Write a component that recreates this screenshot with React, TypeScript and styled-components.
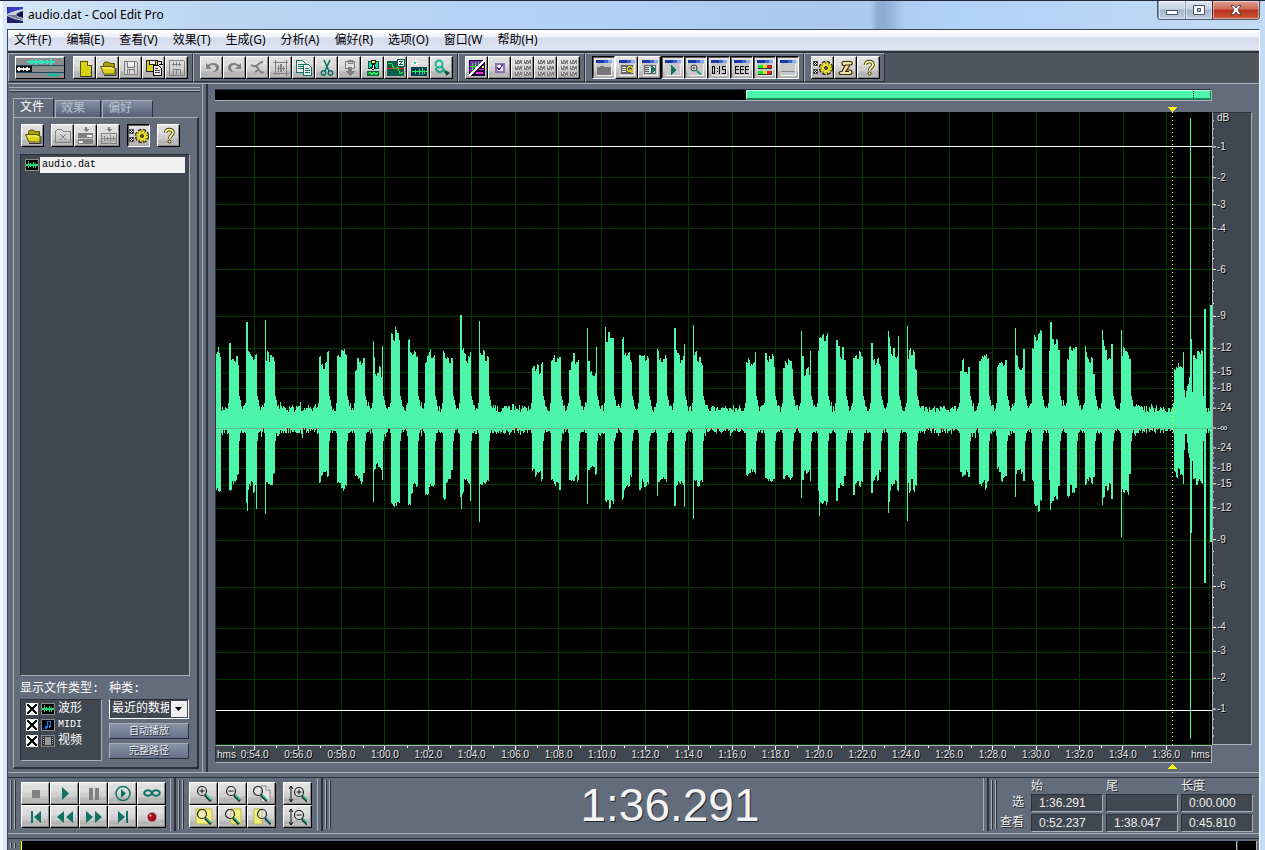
import React from "react";
import styled, { createGlobalStyle, css } from "styled-components";

const C = {
  panel: "#636c7a",
  well: "#404750",
  deep: "#505660",
  light: "#a9b0ba",
  dark: "#2c3038",
  wave: "#4df5ab",
  teal: "#0f7263",
  grid: "#003c00",
};
const UI = `"Noto Sans", "Noto Sans CJK SC", sans-serif`;
const SONG = `"Liberation Mono", "Noto Sans CJK SC", monospace`;
const ARIAL = `"Liberation Sans", "Noto Sans CJK SC", sans-serif`;

const Global = createGlobalStyle`
  * { box-sizing: border-box; }
  html, body { margin: 0; background: #b4d2f2; }
  button, input, select { font: inherit; color: inherit; margin: 0; padding: 0; border: 0; border-radius: 0; background: none; }
`;

/* ---------- window frame ---------- */
const Frame = styled.div`
  display: flex;
  flex-direction: column;
  height: 100vh;
  min-height: 850px;
  min-width: 1000px;
  overflow: hidden;
  padding: 0 5px 0 7px;
  border-top: 1px solid #23273a;
  background:
    linear-gradient(90deg, rgba(255,255,255,.75) 0 2px, transparent 3px),
    linear-gradient(90deg, transparent 68.8%, rgba(70,100,140,.3) 69.4% 70%, transparent 71.5%),
    linear-gradient(90deg, #d8e8f8 0, #bcd6f2 16%, #afd0f4 50%, #a9c8ea 66%, #b0d2f6 76%, #c3dbf4 100%);
`;
const TitleBar = styled.header`
  display: flex;
  flex: none;
  height: 28px;
  gap: 5px;
  font: 12px/28px ${UI};
  color: #000;
`;
const Title = styled.h1`
  flex: 1;
  margin: 0;
  font: inherit;
`;
const Logo = styled.svg`
  width: 16px;
  height: 16px;
  margin-top: 6px;
`;
const Caption = styled.div`
  display: flex;
  height: 19px;
  border: 1px solid #4b5666;
  border-top: 0;
  border-radius: 0 0 4px 4px;
  overflow: hidden;
`;
const CaptionButton = styled.button<{ $close?: boolean }>`
  display: grid;
  place-items: center;
  width: ${(p) => (p.$close ? 47 : 27)}px;
  border-left: ${(p) => (p.$close ? "1px solid #5a2020" : "1px solid #8494a8")};
  box-shadow: inset 0 0 0 1px rgba(255, 255, 255, 0.45);
  background: ${(p) =>
    p.$close
      ? "linear-gradient(#e0a193 0, #cf6a57 45%, #b8321d 50%, #d0573c 100%)"
      : "linear-gradient(#dfe8f2 0, #c4d2e2 45%, #a3b5ca 50%, #bccee0 100%)"};
`;
const Body = styled.div`
  display: flex;
  flex-direction: column;
  flex: 1;
  min-height: 0;
  border: solid #3f4854;
  border-width: 1px 1px 0;
  border-right-color: #fff;
  background: ${C.panel};
`;
const MenuBar = styled.nav`
  display: flex;
  flex: none;
  gap: 15px;
  height: 21px;
  padding-left: 6px;
  border-bottom: 1px solid #a8acb8;
  background: linear-gradient(#fff 0, #eef1f8 35%, #d5daec 40%, #e0e5f4 100%);
  font: 12px/20px ${UI};
  color: #000;
  white-space: nowrap;
`;

/* ---------- toolbar ---------- */
const Toolbar = styled.div`
  display: flex;
  flex: none;
  height: 33px;
  border-top: 2px solid ${C.dark};
  border-bottom: 1px solid ${C.light};
  background: ${C.deep};
`;
const ToolGroup = styled.div`
  display: flex;
  height: 29px;
  padding: 2px 4px 0 6px;
  border: 1px solid ${C.dark};
  border-top-color: ${C.light};
  border-left-color: ${C.light};
  background: ${C.panel};
`;
const Gap = styled.span<{ $w: number }>`
  flex: none;
  width: ${(p) => p.$w}px;
`;
const metal = css`
  background:
    repeating-linear-gradient(177deg, rgba(255,255,255,.14) 0 2px, transparent 3px 6px),
    linear-gradient(#e2e2e2, #d6d6d6 45%, #b4b4b4 80%, #a8a8a8);
`;
const Tool = styled.button<{ $w?: number; $down?: boolean }>`
  display: grid;
  place-items: center;
  flex: none;
  width: ${(p) => p.$w ?? 23}px;
  height: 23px;
  border: solid;
  border-width: 1px;
  ${metal}
  ${(p) =>
    p.$down
      ? css`
          border-color: #000 #fff #fff #000;
          box-shadow: inset 1px 1px 0 #5c5c5c;
        `
      : css`
          border-color: #fff #000 #000 #fff;
          box-shadow: inset -1px -1px 0 #8c8c8c;
        `}
  svg { display: block; }
`;

/* ---------- file organiser ---------- */
const Main = styled.div`
  display: flex;
  flex: 1;
  min-height: 0;
`;
const Organizer = styled.aside`
  display: flex;
  flex-direction: column;
  flex: none;
  width: 194px;
  padding: 3px 3px 3px 5px;
  font: 12px/16px ${SONG};
  color: #fff;
`;
const GripRow = styled.div`
  flex: none;
  height: 4px;
  margin: 0 -1px 7px -4px;
  border: solid ${C.light};
  border-width: 1px 0;
  box-shadow: 0 1px 0 ${C.dark};
`;
const Tabs = styled.div`
  display: flex;
  align-items: flex-end;
  gap: 1px;
  height: 19px;
`;
const Tab = styled.button<{ $on?: boolean; $w: number }>`
  width: ${(p) => p.$w}px;
  height: ${(p) => (p.$on ? 20 : 17)}px;
  margin-bottom: ${(p) => (p.$on ? -1 : 0)}px;
  border: solid;
  border-width: 1px 1px 0;
  border-color: ${C.light} ${C.dark} transparent ${C.light};
  background: ${(p) => (p.$on ? C.panel : "linear-gradient(#8490a6, #566078)")};
  color: ${(p) => (p.$on ? "#fff" : "#b8c0cc")};
  text-align: left;
  padding-left: ${(p) => (p.$on ? 6 : 5)}px;
  line-height: 17px;
`;
const TabPanel = styled.section`
  display: flex;
  flex-direction: column;
  flex: 1;
  min-height: 0;
  padding: 6px 7px 6px 6px;
  border: 1px solid ${C.dark};
  border-top-color: ${C.light};
  border-left-color: ${C.light};
  border-right-width: 2px;
  border-bottom-width: 2px;
`;
const PanelTools = styled.div`
  display: flex;
  flex: none;
  height: 30px;
`;
const inset = css`
  border: 1px solid ${C.light};
  border-top-color: ${C.dark};
  border-left-color: ${C.dark};
  background: ${C.well};
`;
const FileList = styled.ul`
  flex: 1;
  margin: 0;
  padding: 2px 4px;
  list-style: none;
  ${inset}
`;
const FileRow = styled.li`
  display: flex;
  align-items: center;
  gap: 1px;
  height: 16px;
  font-size: 10px;
  color: #000;
  span {
    flex: 1;
    padding-left: 2px;
    background: #f0f0f0;
    line-height: 16px;
  }
`;
const Filters = styled.div`
  display: grid;
  flex: none;
  grid-template-columns: 82px 80px;
  column-gap: 7px;
  grid-template-rows: 23px 62px;
  align-items: end;
`;
const FilterHead = styled.div`
  font-size: 12px;
  line-height: 20px;
  white-space: nowrap;
`;
const TypeList = styled.div`
  height: 62px;
  padding: 1px 5px;
  ${inset}
`;
const TypeRow = styled.label`
  display: flex;
  align-items: center;
  gap: 3px;
  height: 16px;
  font-size: 12px;
  line-height: 16px;
`;
const Mono = styled.span`
  font-size: 10px;
`;
const Tick = styled.input`
  appearance: none;
  width: 12px;
  height: 12px;
  border: 1px solid #fff;
  background: #fff;
  &:checked {
    background:
      linear-gradient(45deg, transparent 42%, #000 43% 57%, transparent 58%),
      linear-gradient(-45deg, transparent 42%, #000 43% 57%, transparent 58%), #fff;
  }
`;
const KindColumn = styled.div`
  display: flex;
  flex-direction: column;
  gap: 4px;
  height: 62px;
`;
const SelectBox = styled.div`
  position: relative;
  height: 20px;
  border: 1px solid #fff;
  border-top-color: ${C.dark};
  background: ${C.well};
  svg {
    position: absolute;
    top: 1px;
    right: 1px;
    pointer-events: none;
  }
`;
const Select = styled.select`
  appearance: none;
  width: 59px;
  height: 18px;
  padding-left: 2px;
  overflow: hidden;
  outline: 0;
  font-size: 12px;
  line-height: 18px;
`;
const FlatButton = styled.button`
  height: 16px;
  border: 1px solid ${C.dark};
  border-top-color: ${C.light};
  border-left-color: ${C.light};
  background: linear-gradient(#8a94a6, #66718a);
  font-size: 10px;
  line-height: 13px;
  color: #e8ecf4;
  text-shadow: 1px 1px 0 #2c3038;
`;
const Divider = styled.div`
  flex: none;
  width: 6px;
  border: solid;
  border-width: 0 2px 0 1px;
  border-color: ${C.light} ${C.dark} ${C.light} ${C.light};
`;

/* ---------- waveform ---------- */
const Editor = styled.main`
  display: grid;
  flex: 1;
  min-width: 0;
  grid-template-columns: minmax(0, 1fr) 40px;
  grid-template-rows: 12px 11px minmax(0, 1fr) 18px 9px;
  padding: 5px 7px 0 7px;
`;
const Overview = styled.div`
  display: flex;
  justify-content: flex-end;
  border: 1px solid ${C.light};
  border-top-color: ${C.dark};
  border-left: 0;
  background: #000;
`;
const OverviewThumb = styled.div`
  position: relative;
  width: 46.7%;
  border: solid;
  border-width: 1px 1px 2px;
  border-color: #b9ffe0 #1b8458 #1b8458 #b9ffe0;
  background: ${C.wave};
  &::after {
    content: "";
    position: absolute;
    right: 16px;
    top: 0;
    bottom: 0;
    border-left: 1px dotted #123;
  }
`;
const Marker = styled.div`
  display: flex;
  padding-right: 35px;
  justify-content: flex-end;
  overflow: hidden;
`;
const Canvas = styled.svg`
  display: block;
  width: 100%;
  height: 100%;
  border-left: 1px solid ${C.dark};
  background: #000;
`;
const Scale = styled.svg`
  display: block;
  width: 100%;
  height: 100%;
  background: ${C.well};
  border: 1px solid ${C.light};
  border-top-color: ${C.dark};
  font: 10px ${ARIAL};
  text {
    fill: #e6e6e6;
    text-shadow: 1px 1px 0 #000;
  }
`;
const TimeRuler = styled.div`
  display: flex;
  border: 1px solid ${C.light};
  border-left-color: ${C.dark};
  background: ${C.well};
  font: 10px/17px ${ARIAL};
  color: #e6e6e6;
  text-shadow: 1px 1px 0 #000;
  white-space: nowrap;
`;
const RulerUnit = styled.span<{ $w: number }>`
  flex: none;
  width: ${(p) => p.$w}px;
  padding-left: ${(p) => (p.$w > 20 ? 3 : 1)}px;
`;
const RulerMark = styled.span`
  flex: 1;
  text-align: center;
  background:
    linear-gradient(#fff, #fff) 50% 0 / 1px 4px no-repeat,
    linear-gradient(#fff, #fff) 0 0 / 1px 2px no-repeat;
`;

/* ---------- transport ---------- */
const Bottom = styled.footer`
  display: flex;
  flex: none;
  height: 62px;
  border: solid ${C.light};
  border-width: 1px 0;
`;
const Segment = styled.div<{ $grow?: boolean; $w?: number }>`
  display: flex;
  flex: ${(p) => (p.$grow ? "1" : "none")};
  ${(p) => p.$w && `width: ${p.$w}px;`}
  margin-top: 4px;
  border-top: 1px solid ${C.dark};
  padding: 0 0 2px 2px;
`;
const Grip = styled.div`
  flex: none;
  width: 5px;
  margin: 2px 0;
  border: solid ${C.light};
  border-width: 0 1px;
  box-shadow: 1px 0 0 ${C.dark}, inset 1px 0 0 ${C.dark};
`;
const Keys = styled.div<{ $cols: number }>`
  display: grid;
  flex: none;
  grid-template-columns: repeat(${(p) => p.$cols}, 29px);
  grid-auto-rows: 23px;
  align-content: start;
  padding-top: 4px;
  margin-left: ${(p) => (p.$cols === 1 ? 7 : 6)}px;
`;
const Spring = styled.div`
  flex: 1;
`;
const BigTime = styled.output`
  flex: 1;
  padding-left: 27px;
  font: 46px/54px ${ARIAL};
  text-align: center;
  color: #f4f4f4;
  text-shadow: 1px 1px 0 #22262c;
`;
const Times = styled.div`
  display: grid;
  flex: 1;
  grid-template-columns: 28px repeat(3, 72px);
  grid-template-rows: 14px 18px 18px;
  column-gap: 3px;
  row-gap: 2px;
  justify-content: end;
  padding-right: 5px;
  margin-right: 1px;
  font: 12px/16px ${ARIAL};
  color: #eee;
  text-shadow: 1px 1px 0 #22262c;
`;
const TimeLabel = styled.span<{ $right?: boolean }>`
  text-align: ${(p) => (p.$right ? "right" : "left")};
  padding-right: ${(p) => (p.$right ? 4 : 0)}px;
  white-space: nowrap;
`;
const TimeField = styled.input`
  width: 72px;
  height: 18px;
  padding-left: 7px;
  ${inset}
`;
const Status = styled.div`
  display: flex;
  flex: none;
  height: 12px;
  margin-top: 4px;
  border-top: 1px solid ${C.dark};
  padding: 2px 2px 0;
`;
const Meter = styled.div<{ $end?: boolean }>`
  flex: ${(p) => (p.$end ? "none" : "1")};
  width: 20px;
  margin-left: ${(p) => (p.$end ? 0 : 6)}px;
  border: solid ${C.light};
  border-width: 0 1px 0 0;
  border-left: ${(p) => (p.$end ? "1px solid #444" : "1px solid #ff0")};
  background: #000;
`;

/* ---------- icons ---------- */
const Ic = ({ children, w = 18, h = 18, soft }: { children: React.ReactNode; w?: number; h?: number; soft?: boolean }) => (
  <svg width={w} height={h} viewBox={`0 0 ${w} ${h}`} shapeRendering={soft ? "auto" : "crispEdges"} fill="none" aria-hidden="true">
    {children}
  </svg>
);
const G = "#808080";
const Y = "#d8d018";

const Win = ({ children }: { children?: React.ReactNode }) => (
  <Ic>
    <path d="M1 1h16v16H1z" fill="#c8c8c8" />
    <path d="M2 16h14V5M16 5v12" stroke="#eee" />
    <path d="M1 1h8v3H1z" fill="#1838a8" />
    <path d="M9 1h4v3H9z" fill="#3c64d0" />
    <path d="M13 1h4v3h-4z" fill="#88a8e8" />
    {children}
  </Ic>
);
const folderIcon = (
  <Ic soft>
    <path d="M4.500 11V4.500L6 3h3.500l1.500 1.500h4.500V9" fill="#a89c08" stroke="#5c5600" />
    <path d="M1.500 7.500h10.500l4 1.500v6H5z" fill="#ddd020" stroke="#5c5600" />
    <path d="M3 9h9l3 1" stroke="#fff890" />
    <path d="M5 16.500h12V9" stroke="#333" />
  </Ic>
);
const diskArt = (c: string, f: string) => (
  <>
    <path d="M2.500 2.500h12l1 1v12h-13z" fill={f} stroke={c} />
    <path d="M5.500 3v5h7V3M5.500 15.500v-5h7v5M7.500 11v4" stroke={c} />
    <path d="M6 3h6v4H6z" fill="#f0f0f0" />
  </>
);
const groupGrid = (
  <Ic>
    {[1, 7, 13].map((y) =>
      [1, 10].map((x) => (
        <g key={`${x}-${y}`}>
          <path d={`M${x} ${y}h7v4h-7z`} fill={G} />
          <path d={`M${x + 1} ${y}h1v2h-1zM${x + 4} ${y}h1v1h-1zM${x + 3} ${y + 2}h1v1h-1zM${x + 5} ${y + 3}h1v1h-1z`} fill="#ddd" />
        </g>
      ))
    )}
  </Ic>
);
const gearIcon = (
  <Ic w={20} soft>
    <g shapeRendering="crispEdges">
      <path d="M0 2h5v5H0zM0 10h5v5H0z" fill="#555" />
      <path d="M1 3h3v3H1zM1 11h3v3H1z" fill="#eee" />
      <path d="M1 3h1v1H1zM2 4h1v1H2zM3 5h1v1H3zM3 3h1v1H3zM1 5h1v1H1zM1 11h1v1H1zM2 12h1v1H2zM3 13h1v1H3zM3 11h1v1H3zM1 13h1v1H1z" fill="#000" />
    </g>
    <circle cx="13" cy="9" r="5" stroke="#2c2800" strokeWidth="4.400" strokeDasharray="2.800 1.127" />
    <circle cx="13" cy="9" r="4.700" stroke="#ecdc20" strokeWidth="2.600" strokeDasharray="2 1.690" />
    <circle cx="13" cy="9" r="3" stroke="#ecdc20" strokeWidth="2.600" />
    <circle cx="13" cy="9" r="1.600" fill="#555" stroke="#2c2800" strokeWidth=".8" />
  </Ic>
);
const helpIcon = (
  <Ic soft>
    <path d="M5.500 6c0-4.500 7.500-4.500 7.500-.5 0 3-3.500 3-3.500 6" stroke="#3c3800" strokeWidth="3.600" />
    <path d="M5.500 6c0-4.500 7.500-4.500 7.500-.5 0 3-3.500 3-3.500 6" stroke="#fff8a0" strokeWidth="1.800" />
    <circle cx="9.500" cy="14.500" r="1.500" fill="#fff8a0" stroke="#3c3800" />
  </Ic>
);
const lens = (x: number, y: number, sign: string) => (
  <>
    <circle cx={x} cy={y} r="4.500" fill="#e8e8e8" fillOpacity=".45" stroke="#222" strokeWidth="1.200" />
    {sign && <path d={sign === "+" ? `M${x - 2.5} ${y}h5M${x} ${y - 2.5}v5` : `M${x - 2.5} ${y}h5`} stroke="#111" />}
    <path d={`M${x + 3} ${y + 4}l6 6`} stroke="#222" strokeWidth="2.600" />
    <path d={`M${x + 4} ${y + 4}l5 5`} stroke="#18c8a0" strokeWidth="1.400" />
  </>
);
const waveIcon = (
  <Ic w={14} h={12}>
    <path d="M0 0h14v12H0z" fill="#888" />
    <path d="M1 1h12v10H1z" fill="#000" />
    <path d="M1 5h12v2H1zM3 2h1v7H3zM5 4h1v4H5zM8 3h1v6H8zM10 4h1v5h-1z" fill="#20d878" />
  </Ic>
);

const fileIcons: [string, React.ReactNode][] = [
  ["新建", <Ic><path d="M4 2h7l4 4v11H4z" fill={Y} stroke="#5c5600" /><path d="M11 2v4h4" fill="#fff8a0" stroke="#5c5600" /><path d="M15.500 6v11.500H5" stroke="#333" /></Ic>],
  ["打开", folderIcon],
  ["保存", <Ic>{diskArt(G, "#d8d8d8")}</Ic>],
  ["另存为", <Ic><path d="M1 1h11v11H1z" fill="#d8d018" stroke="#222" /><path d="M4 1h6v4H4z" fill="#eee" stroke="#222" /><path d="M13 2h3v3M14 5h4" stroke="#000" /><path d="M8.500 6.500h5l3 3v7h-8z" fill="#eee" stroke="#000" /><path d="M10 9h3M10 11h5M10 13h5" stroke="#444" /></Ic>],
  ["保存全部", <Ic><path d="M1.500 1.500h14l1 1v14h-15z" stroke={G} /><path d="M4 5h9M5.500 3v4M8.500 3v4M11.500 3v4M5.500 16v-6h7v6M8 11v5" stroke={G} /></Ic>],
];
const editIcons: [string, React.ReactNode][] = [
  ["撤消", <Ic soft><path d="M3 4v6h6L6.500 7.500C9 5 13 6 13 9c0 2-1.500 3.500-4 4 5 0 7.500-2 7-5-.6-4-6.500-5.500-11-2z" fill={G} /></Ic>],
  ["重做", <Ic soft><path d="M15 4v6H9l2.500-2.500C9 5 5 6 5 9c0 2 1.500 3.500 4 4-5 0-7.500-2-7-5 .6-4 6.500-5.500 11-2z" fill={G} /></Ic>],
  ["重复", <Ic soft><path d="M14 3c-4 0-5 4-8 4s-4-1-4-1M6 7c2 1 3 1 4 4 1 2 3 3 5 2M10 10l-4 3" stroke={G} strokeWidth="1.800" /></Ic>],
  ["剪裁", <Ic><path d="M1 3h15v1H1zM3 1h1v15H3zM1 14h16v1H1zM14 1h1v16h-1zM5 9h8v1H5zM6 6h1v7H6zM8 5h2v8H8zM11 7h1v5h-1z" fill={G} /></Ic>],
  ["复制", <Ic><path d="M1.500 1.500h6l3 3v9h-9z" fill="#eee" stroke={C.teal} /><path d="M3 5h5M3 7h5M3 9h5" stroke={C.teal} /><path d="M8.500 5.500h5l3 3v8h-8z" fill="#eee" stroke={C.teal} /><path d="M10 9h4M10 11h5M10 13h5" stroke={C.teal} /></Ic>],
  ["剪切", <Ic soft><path d="M6 1l5 11M12 1L7 12" stroke={C.teal} strokeWidth="1.600" /><circle cx="5.500" cy="14" r="2.200" stroke={C.teal} strokeWidth="1.400" /><circle cx="12.500" cy="14" r="2.200" stroke={C.teal} strokeWidth="1.400" /></Ic>],
  ["粘贴", <Ic><path d="M4.500 2.500h9v7h-9zM7 1h4v3H7z" fill="#ddd" stroke={G} /><path d="M7 8h4v4h3l-5 5-5-5h3z" fill={G} /></Ic>],
  ["混合粘贴", <Ic><path d="M4 2h10v7H4z" fill="#18d8b0" stroke="#063" /><path d="M7 1h4v3H7z" fill="#ffef60" stroke="#222" /><path d="M8 5h2v3h2l-3 3-3-3h2z" fill="#fff" stroke="#111" /><path d="M3 12h12v5H3z" fill="#064" /><path d="M4 15l2-2 2 3 2-3 2 3 2-3" stroke="#2f4" /></Ic>],
  ["零点", <Ic><path d="M0 2h17v15H0z" fill="#0c5c4c" /><path d="M0 9h17v1H0z" fill="#f02020" /><path d="M1 4l4 1 2 5 4-2 2 7 3-2" stroke="#20e040" /><path d="M10 0h8v8h-8z" fill="#0c5c4c" /><path d="M11 1h6v6h-6z" fill="#eee" /><path d="M12 2h4v1h-1v1h-1v1h2v1h-4V5h1V4h1V3h-2z" fill="#0c5c4c" /></Ic>],
  ["降噪", <Ic><path d="M1 8h16v9H1z" fill="#0c3c54" /><path d="M2 12h15v1H2zM5 11h1v4H5zM9 10h1v6H9zM12 9h1v7h-1zM14 11h1v4h-1z" fill="#28f060" /><path d="M5 0v8M1 4h8M2 1l6 6M8 1L2 7" stroke="#fff" /><path d="M4 3h2v2H4z" fill="#30d0b0" /></Ic>],
  ["效果", <Ic soft><circle cx="6" cy="5" r="3.500" stroke="#18b890" strokeWidth="2" /><path d="M3 9c0 4 6 6 6 2M8 8c3 0 2 6 6 6" stroke="#18a080" strokeWidth="2" /><path d="M12 11l5 3-4 3z" fill="#053" /></Ic>],
];
const viewIcons: [string, React.ReactNode][] = [
  ["波形与频谱", <Ic><path d="M1 1h16v16H1z" fill="#18083c" /><path d="M2 2h14L2 16z" fill="#7a28b8" /><path d="M2 7h8v1H2zM4 4h1v7H4zM7 3h1v8H7zM10 3h1v5h-1z" fill="#20f020" /><path d="M1 17L17 1" stroke="#fff" strokeWidth="1.500" /><path d="M8 13h7v2H8zM11 10h5v1h-5z" fill="#f030d0" /><path d="M14 7h2v2h-2z" fill="#fff020" /></Ic>],
  ["多轨选择", <Ic><path d="M4.500 4.500h8v8h-8z" fill="#eee" stroke="#8c70b8" strokeWidth="2" /><path d="M6 8l2 3 4-6" stroke="#5020a0" /></Ic>],
  ["分组一", groupGrid],
  ["分组二", groupGrid],
  ["分组三", groupGrid],
];
const windowIcons: [string, React.ReactNode, boolean][] = [
  ["文件窗口", <Win><path d="M2 8h3V7h4v1h7v8H2z" fill="#777" /></Win>, true],
  ["提示列表", <Win><path d="M3 6h12v9H3z" fill="#666" /><path d="M4 8h4v1H4zM4 10h4v1H4zM4 12h4v1H4z" fill="#eee" /><circle cx="12" cy="10" r="2.500" stroke="#d8cc10" strokeWidth="1.500" /><path d="M12 11l3 3" stroke="#d8cc10" strokeWidth="1.500" /></Win>, false],
  ["播放列表", <Win><path d="M3 6h12v9H3z" fill="#666" /><path d="M4 7h10v7H4z" fill="#ddd" /><path d="M4 8h4v1H4zM4 10h4v1H4zM4 12h4v1H4z" fill="#555" /><path d="M10 6l5 4.500-5 4.500z" fill={C.teal} /></Win>, false],
  ["播放控制", <Win><path d="M7 6l5 5-5 5z" fill={C.teal} /></Win>, true],
  ["缩放控制", <Win><g shapeRendering="auto"><circle cx="7" cy="9" r="3" fill="#eee" stroke="#333" /><path d="M5.500 9h3M7 7.500v3" stroke="#222" strokeWidth=".8" /><path d="M9.500 11.500l4.500 4" stroke="#18a080" strokeWidth="2" /></g></Win>, true],
  ["时间窗口", <Win><path d="M2 7h3v8H2zM3 8v6h1V8zM7 9h1v1H7zM7 12h1v1H7zM9 7h1v8H9zM12 7h4v1h-3v2h3v5h-4v-1h3v-3h-3z" fill="#000" fillRule="evenodd" /></Win>, true],
  ["选择窗口", <Win>{[2, 7, 12].map((x) => <path key={x} d={`M${x} 7h4v1h-3v2h3v1h-3v3h3v1h-4z`} fill="#111" />)}</Win>, true],
  ["电平表", <Win><path d="M2 6h14v4H2zM2 12h14v4H2z" fill="#333" /><path d="M2 6h5v3H2zM2 12h5v3H2z" fill="#20e030" /><path d="M7 6h4v3H7zM7 12h4v3H7z" fill="#f0e020" /><path d="M11 6h4v3h-4zM11 12h4v3h-4z" fill="#e82020" /></Win>, true],
  ["状态栏", <Win><path d="M2 12h14v1H2z" fill="#888" /></Win>, true],
];
const helpIcons: [string, React.ReactNode][] = [
  ["设置", gearIcon],
  ["脚本", <Ic soft><path d="M6.500 2.500h7c2.500 0 2.500 3.500 0 3.500h-.5L10 11h3c2.500 0 2.500 4.500 0 4.500H4c-2.500 0-2.500-3 0-3h1l3-6H6.500c-2 0-2-4 0-4z" fill="#f4e0a8" stroke="#3c2c00" strokeWidth="1.200" /><path d="M8 6h5M10 11l-2 1.500h4" stroke="#3c2c00" /></Ic>],
  ["帮助", helpIcon],
];
const transport: [string, React.ReactNode][] = [
  ["停止", <path d="M5 5h8v8H5z" fill={G} />],
  ["播放", <path d="M6 2l7 6.500L6 15z" fill={C.teal} />],
  ["暂停", <path d="M4 3h4v12H4zM10 3h4v12h-4z" fill={G} />],
  ["播放到结尾", <><circle cx="9" cy="8.500" r="7" stroke={C.teal} strokeWidth="1.500" /><path d="M7 4v9l5-4.500z" fill={C.teal} /></>],
  ["循环播放", <><ellipse cx="5" cy="8" rx="3.800" ry="2.800" stroke={C.teal} strokeWidth="2" /><ellipse cx="13" cy="8" rx="3.800" ry="2.800" stroke={C.teal} strokeWidth="2" /></>],
  ["到开头", <path d="M4 3h2v12H4zM14 3v12L7 9z" fill={C.teal} />],
  ["倒带", <path d="M8 3v12L1 9zM17 3v12l-7-6z" fill={C.teal} />],
  ["快进", <path d="M1 3v12l7-6zM10 3v12l7-6z" fill={C.teal} />],
  ["到结尾", <path d="M12 3h2v12h-2zM4 3v12l7-6z" fill={C.teal} />],
  ["录音", <><circle cx="9" cy="9" r="4.500" fill="#a01018" /><circle cx="7.500" cy="7.500" r="1.200" fill="#e89090" /></>],
];
const zoomKeys: [string, React.ReactNode][] = [
  ["放大", lens(7, 6, "+")],
  ["缩小", lens(7, 6, "-")],
  ["全部显示", <><path d="M8 1h5l4 4v12H8z" fill="#e4e4e4" stroke="#888" /><path d="M13 1v4h4" fill="#fff" stroke="#888" />{lens(5, 6, "")}</>],
  ["放大选区", <><path d="M1 1h16v15H1z" fill="#f4f080" stroke="#c0b840" />{lens(7, 6, "")}</>],
  ["放大选区左侧", <><path d="M7 1h10v15H7z" fill="#f4f080" stroke="#c0b840" />{lens(6, 6, "")}</>],
  ["放大选区右侧", <><path d="M1 1h8v15H1z" fill="#f4f080" stroke="#c0b840" />{lens(9, 6, "")}</>],
];
const vArrow = <path d="M2 1v16M0 4l2-3 2 3M0 14l2 3 2-3" stroke="#111" />;

/* ---------- waveform data ---------- */
const X0 = 216;
const Y0 = 112;
type Burst = [number, number, number[], number[]];
const bursts: Burst[] = [
  [216, 221, [352, 347, 352, 355], [488, 491, 489]],
  [229, 239, [357, 360, 357, 360, 356, 366], [490, 482, 480, 475]],
  [246, 257, [350, 353, 356, 359, 354], [489, 485, 481, 492, 484]],
  [265, 275, [361, 351, 361, 355, 357, 362], [482, 483, 485, 474]],
  [319, 329, [356, 364, 367, 362, 350], [482, 475, 470, 471, 475]],
  [337, 347, [355, 358, 350, 349, 353], [482, 484, 488, 489, 484]],
  [355, 365, [370, 357, 362, 363, 357], [475, 478, 482, 472]],
  [373, 383, [357, 375, 373, 366, 377], [470, 463, 467, 470]],
  [391, 400, [333, 340, 328, 332, 341], [503, 506, 504, 501, 504]],
  [408, 418, [339, 351, 354, 352, 356], [504, 492, 484, 486]],
  [425, 435, [361, 354, 350, 357, 355], [493, 485, 485]],
  [443, 453, [352, 358, 357, 362, 358], [499, 482, 478, 470]],
  [460, 471, [340, 349, 354, 362, 357, 353], [493, 480, 484]],
  [479, 489, [353, 354, 350, 359, 356], [484, 482, 480]],
  [532, 543, [367, 369, 364, 372, 362], [470, 475, 472, 470, 479]],
  [551, 561, [360, 356, 361, 357, 356], [479, 485, 481, 489]],
  [569, 579, [368, 361, 353, 363, 360], [478, 480, 481, 476, 480]],
  [587, 597, [361, 371, 375, 371], [470, 467, 466, 473]],
  [605, 614, [341, 331, 338, 337], [501, 499, 508, 500, 503]],
  [622, 632, [338, 353, 355, 352, 361], [499, 488, 485, 486, 476]],
  [639, 649, [354, 357, 354, 360, 356], [489, 480, 486, 482]],
  [657, 667, [349, 358, 361, 360, 356], [480, 478, 480]],
  [674, 685, [350, 354, 361, 355], [486, 482, 484]],
  [693, 703, [356, 352, 360, 356, 363], [481, 485, 480]],
  [746, 756, [362, 359, 365, 363, 363], [475, 472, 470, 473]],
  [765, 775, [354, 360, 357, 358, 354, 365], [479, 479, 480, 481, 477]],
  [783, 793, [366, 362, 364, 360, 359, 368], [477, 474, 478, 476]],
  [801, 811, [356, 375, 367, 374], [480, 470, 472, 469]],
  [818, 828, [350, 338, 335, 340, 334], [490, 503, 504, 500, 503]],
  [836, 846, [340, 346, 357, 348, 360], [501, 488, 483, 487, 476]],
  [853, 863, [357, 354, 358, 352, 357], [494, 482, 480, 487, 482]],
  [871, 881, [343, 359, 363, 358, 364], [493, 480, 475, 480, 470]],
  [888, 899, [345, 355, 348, 357, 356], [490, 485, 484, 480, 490]],
  [907, 917, [359, 348, 356, 350, 368], [483, 491, 480, 490, 484]],
  [960, 970, [370, 360, 371, 373, 368], [471, 477, 474, 471, 478]],
  [979, 989, [359, 357, 356, 355, 357], [482, 484, 481, 489, 480]],
  [997, 1007, [366, 363, 361, 365, 359], [468, 472, 480, 477, 475]],
  [1015, 1025, [356, 367, 369, 365], [475, 470, 468, 473, 481]],
  [1032, 1042, [349, 335, 340, 332, 330], [481, 504, 505, 510, 500]],
  [1049, 1060, [351, 340, 343, 338, 350], [480, 502, 495, 498, 486]],
  [1067, 1077, [358, 346, 350, 348, 347], [495, 485, 492, 488]],
  [1085, 1095, [352, 358, 363, 358, 373], [484, 480, 478, 484, 476]],
  [1102, 1113, [345, 350, 360, 357, 345], [496, 486, 491, 482, 497]],
  [1121, 1131, [355, 347, 350, 353, 360], [488, 492, 489, 493, 475]],
  [1174, 1184, [368, 366, 362, 365, 367, 355], [470, 476, 467, 474, 474]],
  [1184, 1190, [390, 397, 391, 387, 384, 375], [450, 434, 434, 444, 453, 456]],
  [1192, 1193, [391], [460]],
  [1193, 1203, [354, 358, 350, 353, 349], [478, 484, 480, 482]],
];
const spikes: [number, number, number, number][] = [
  [229, 2, 343, 490], [246, 2, 322, 503], [247, 1, 322, 511], [256, 1, 354, 509], [265, 1, 320, 514],
  [373, 1, 341, 502], [382, 1, 346, 480], [460, 2, 315, 497], [461, 1, 315, 509], [470, 1, 352, 501],
  [479, 1, 321, 522], [587, 1, 328, 504], [596, 1, 347, 474], [605, 1, 327, 501], [657, 1, 349, 496],
  [674, 2, 328, 506], [684, 1, 344, 507], [693, 1, 325, 519], [755, 1, 352, 473], [801, 1, 331, 498],
  [810, 1, 351, 481], [819, 1, 338, 516], [871, 2, 343, 485], [888, 1, 331, 513], [889, 1, 337, 502],
  [898, 1, 336, 488], [907, 1, 326, 521], [1015, 1, 328, 497], [1023, 2, 349, 475], [1050, 2, 322, 503],
  [1050, 1, 322, 510], [1085, 1, 346, 484], [1102, 1, 330, 505], [1103, 1, 340, 498], [1111, 2, 344, 499],
  [1121, 1, 330, 537], [1183, 1, 352, 484], [1190, 1, 118, 739], [1191, 1, 339, 533], [1204, 2, 309, 583],
  [1210, 2, 305, 542],
];

function buildWave() {
  let seed = 7;
  const rnd = () => ((seed = (seed * 16807) % 2147483647) / 2147483647);
  const n = 996;
  const top: number[] = [];
  const bot: number[] = [];
  for (let i = 0; i < n; i++) {
    top.push(Math.round(412 - rnd() * 7 - (rnd() > 0.85 ? rnd() * 6 : 0)));
    bot.push(Math.round(428.600 + rnd() * 5 + (rnd() > 0.85 ? rnd() * 5 : 0)));
  }
  const put = (x: number, t: number, b: number) => {
    const i = x - X0;
    if (i < 0 || i >= n) return;
    top[i] = Math.min(top[i], Math.round(t));
    bot[i] = Math.max(bot[i], Math.round(b));
  };
  bursts.forEach(([a, b, ts, bs]) => {
    for (let x = a; x < b; x++) {
      const k = (x - a) / (b - a);
      const j = rnd() * 3 - 1;
      put(x, ts[Math.floor(k * ts.length)] + j, bs[Math.floor(k * bs.length)] + j);
    }
    if (b - a > 6) {
      put(b, 396, 441);
      put(b + 1, 400, 433);
      put(b + 2, 406, 430);
      put(a - 1, 403, 433);
    }
  });
  spikes.forEach(([x, w, t, b]) => {
    for (let i = 0; i < w; i++) put(x + i, t, b);
  });
  let d = `M0 ${top[0] - Y0}`;
  for (let i = 0; i < n; i++) d += `V${top[i] - Y0}h1`;
  for (let i = n - 1; i >= 0; i--) d += `V${bot[i] - Y0}h-1`;
  const red: number[] = [];
  bot.forEach((v, i) => v === 429 && rnd() > 0.6 && red.push(i));
  return { d: d + "Z", red };
}
const wave = buildWave();

const dbMarks: [string, number][] = [
  ["-1", 146], ["-2", 177], ["-3", 204], ["-4", 228], ["-6", 269], ["-9", 316], ["-12", 348], ["-15", 372],
  ["-18", 388], ["-24", 408], ["-∞", 428], ["-24", 448], ["-18", 468], ["-15", 484], ["-12", 508], ["-9", 540],
  ["-6", 587], ["-4", 628], ["-3", 652], ["-2", 679], ["-1", 710],
];
const minorDb = [120, 128, 137, 156, 166, 190, 216, 240, 249, 258, 280, 291, 303, 326, 338, 356, 364, 378, 383, 393, 398, 403, 453, 458, 463, 473, 478, 492, 500, 518, 529, 552, 565, 576, 598, 608, 618, 640, 666, 694, 720, 729, 737];
const pct = (y: number) => `${((y - Y0) / 633) * 100}%`;
const gridX = Array.from({ length: 23 }, (_, i) => Math.round(38 + i * 43.43));
const times = Array.from({ length: 22 }, (_, i) => {
  const s = 54 + i * 2;
  return `${Math.floor(s / 60)}:${String(s % 60).padStart(2, "0")}.0`;
});
const menus = ["文件(F)", "编辑(E)", "查看(V)", "效果(T)", "生成(G)", "分析(A)", "偏好(R)", "选项(O)", "窗口(W", "帮助(H)"];

const ToolSet = ({ items }: { items: [string, React.ReactNode, boolean?][] }) => (
  <>
    {items.map(([name, icon, down]) => (
      <Tool key={name} aria-label={name} $down={down}>{icon}</Tool>
    ))}
  </>
);

export default function App() {
  return (
    <Frame>
      <Global />
      <TitleBar>
        <Logo viewBox="0 0 16 16" aria-hidden="true">
          <path d="M0 0h16v16H0z" fill="#20206c" />
          <path d="M2 0h14v4C10 3 6 4 3 6H0V3z" fill="#3a3cc0" />
          <path d="M16 2C9 3 5 5 0 7v2c5 2 9 4 16 5v-3c-4-1-6-2-7-3 1-2 3-3 7-4z" fill="#c8d0e0" />
          <path d="M0 8h9c1 2 3 3 7 4v1C9 12 5 10 0 8z" fill="#707890" />
          <path d="M16 5v5c-3 0-4-1-5-2 1-2 2-3 5-3z" fill="#14143c" />
        </Logo>
        <Title>audio.dat - Cool Edit Pro</Title>
        <Caption>
          <CaptionButton aria-label="最小化">
            <svg width="12" height="12" viewBox="0 0 12 12"><path d="M.5 6.500h11v4H.5z" fill="#fff" stroke="#4b5060" /></svg>
          </CaptionButton>
          <CaptionButton aria-label="最大化">
            <svg width="12" height="12" viewBox="0 0 12 12"><path d="M.5 1.500h11v9H.5zM4.500 4.500v3h3v-3z" fill="#fff" fillRule="evenodd" stroke="#4b5060" /></svg>
          </CaptionButton>
          <CaptionButton aria-label="关闭" $close>
            <svg width="12" height="12" viewBox="0 0 12 12"><path d="M1 1.500h3l2 2.500 2-2.500h3L8 6l3 4.500H8L6 8l-2 2.500H1L4 6z" fill="#fff" stroke="#50404a" /></svg>
          </CaptionButton>
        </Caption>
      </TitleBar>
      <Body>
        <MenuBar>{menus.map((m) => <button key={m}>{m}</button>)}</MenuBar>
        <Toolbar>
          <ToolGroup>
            <Tool $w={50} aria-label="多轨视图">
              <Ic w={48} h={20}>
                <path d="M0 0h48v20H0z" fill="#8c8c8c" />
                <path d="M0 7h48v1H0zM0 14h48v1H0z" fill="#174a70" />
                <path d="M0 8h16v6H0z" fill="#111" />
                <path d="M1 10h13v2H1zM2 9h2v4H2zM7 9h1v4H7zM10 9h2v4h-2z" fill="#eee" />
                <path d="M11 3h28v2H11zM14 2h3v4h-3zM19 1h2v6h-2zM23 2h4v4h-4zM30 2h2v4h-2zM34 1h2v6h-2z" fill="#30e8c0" />
                <path d="M31 16h12v2H31zM33 15h2v4h-2zM38 15h1v4h-1zM41 15h1v4h-1z" fill="#18b8a0" />
              </Ic>
            </Tool>
            <Gap $w={8} />
            <ToolSet items={fileIcons} />
          </ToolGroup>
          <ToolGroup><ToolSet items={editIcons} /></ToolGroup>
          <ToolGroup><ToolSet items={viewIcons} /></ToolGroup>
          <ToolGroup><ToolSet items={windowIcons} /></ToolGroup>
          <ToolGroup><ToolSet items={helpIcons} /></ToolGroup>
        </Toolbar>

        <Main>
          <Organizer>
            <GripRow />
            <Tabs role="tablist">
              <Tab role="tab" aria-selected $on $w={41}>文件</Tab>
              <Tab role="tab" aria-selected={false} $w={46}>效果</Tab>
              <Tab role="tab" aria-selected={false} $w={51}>偏好</Tab>
            </Tabs>
            <TabPanel>
              <PanelTools>
                <Gap $w={1} />
                <Tool aria-label="打开文件">{folderIcon}</Tool>
                <Gap $w={7} />
                <Tool aria-label="关闭文件">
                  <Ic><path d="M1.500 15.500v-11l2-2h4l2 2h7v11z" stroke={G} /><path d="M6 7l6 6M12 7l-6 6" stroke={G} /></Ic>
                </Tool>
                <Tool aria-label="插入到多轨">
                  <Ic><path d="M8 0h2v2h2L9 5 6 2h2z" fill={G} /><path d="M1 6h15v5H1zM1 12h15v5H1z" fill={G} /><path d="M10 8h5v2h-5zM2 14h4v2H2z" fill="#eee" /></Ic>
                </Tool>
                <Tool aria-label="编辑文件">
                  <Ic><path d="M8 0h2v2h2L9 5 6 2h2z" fill={G} /><path d="M1.500 6.500h15v10h-15z" stroke={G} /><path d="M2 11h14v1H2zM4 9h1v5H4zM7 10h1v4H7zM10 8h1v7h-1zM13 9h1v5h-1z" fill={G} /></Ic>
                </Tool>
                <Gap $w={7} />
                <Tool aria-label="高级选项" $down>{gearIcon}</Tool>
                <Gap $w={7} />
                <Tool aria-label="帮助">{helpIcon}</Tool>
              </PanelTools>
              <FileList>
                <FileRow>{waveIcon}<span>audio.dat</span></FileRow>
              </FileList>
              <Filters>
                <FilterHead>显示文件类型:</FilterHead>
                <FilterHead as="label" htmlFor="kind">种类:</FilterHead>
                <TypeList>
                  <TypeRow><Tick type="checkbox" defaultChecked />{waveIcon}波形</TypeRow>
                  <TypeRow>
                    <Tick type="checkbox" defaultChecked />
                    <Ic w={14} h={12}><path d="M0 0h14v12H0z" fill="#888" /><path d="M1 1h12v10H1z" fill="#000" /><path d="M6 2h4v1H6zM6 3h1v6H6zM9 3h1v5H9zM4 7h2v3H4zM8 6h1v3H8z" fill="#1878f0" /></Ic>
                    <Mono>MIDI</Mono>
                  </TypeRow>
                  <TypeRow>
                    <Tick type="checkbox" defaultChecked />
                    <Ic w={14} h={12}><path d="M0 0h14v12H0z" fill="#888" /><path d="M1 1h12v10H1z" fill="#333" /><path d="M4 2h6v8H4z" fill="#999" /><path d="M2.500 2v8M11.500 2v8" stroke="#aaa" strokeDasharray="1 1" /></Ic>
                    视频
                  </TypeRow>
                </TypeList>
                <KindColumn>
                  <SelectBox>
                    <Select id="kind"><option>最近的数据</option></Select>
                    <svg width="16" height="16" viewBox="0 0 16 16" aria-hidden="true">
                      <path d="M0 0h16v16H0z" fill="#f0f0f0" />
                      <path d="M4 6h7l-3.500 4z" fill="#000" />
                    </svg>
                  </SelectBox>
                  <FlatButton>自动播放</FlatButton>
                  <FlatButton>完整路径</FlatButton>
                </KindColumn>
              </Filters>
            </TabPanel>
          </Organizer>
          <Divider />
          <Editor>
            <Overview><OverviewThumb /></Overview>
            <span />
            <Marker>
              <svg width="9" height="11" viewBox="0 0 9 11" shapeRendering="crispEdges"><path d="M0 6h9l-4.500 5z" fill="#ff0" /></svg>
            </Marker>
            <span />
            <Canvas viewBox="0 0 996 633" preserveAspectRatio="none" shapeRendering="crispEdges" role="img" aria-label="波形">
              {gridX.map((x) => <rect key={x} x={x} y="0" width="1" height="633" fill={C.grid} />)}
              {dbMarks.map(([, y]) => <rect key={y} x="0" y={y - Y0} width="996" height="1" fill={C.grid} />)}
              <rect x="0" y="632" width="996" height="1" fill={C.grid} />
              <path d={wave.d} fill={C.wave} />
              <rect x="0" y="316" width="996" height="1" fill="#62c08c" />
              {wave.red.map((x) => <rect key={x} x={x} y="316" width="1" height="1" fill="#e01010" />)}
              <rect x="0" y="34" width="996" height="1" fill="#fff" />
              <rect x="0" y="598" width="996" height="1" fill="#fff" />
              <path d="M956.500 0V633" stroke="#ff0" strokeDasharray="1 3" />
            </Canvas>
            <Scale>
              <text x="4" y="8">dB</text>
              {minorDb.map((y) => <line key={y} x1="0" x2="1" y1={pct(y)} y2={pct(y)} stroke="#fff" />)}
              {dbMarks.map(([t, y]) => (
                <React.Fragment key={y}>
                  <line x1="0" x2="3" y1={pct(y)} y2={pct(y)} stroke="#fff" />
                  <text x="4" y={pct(y)} dy="3">{t}</text>
                </React.Fragment>
              ))}
            </Scale>
            <TimeRuler>
              <RulerUnit $w={17}>hms</RulerUnit>
              {times.map((t) => <RulerMark key={t}>{t}</RulerMark>)}
              <RulerUnit $w={23}>hms</RulerUnit>
            </TimeRuler>
            <span />
            <Marker>
              <svg width="9" height="7" viewBox="0 0 9 7" shapeRendering="crispEdges"><path d="M0 6h9L4.500 1z" fill="#ff0" /></svg>
            </Marker>
          </Editor>
        </Main>

        <Bottom>
          <Segment $w={168}>
            <Grip />
            <Keys $cols={5}>
              {transport.map(([n, i]) => <Tool key={n} $w={29} aria-label={n}><Ic soft>{i}</Ic></Tool>)}
            </Keys>
            <Spring />
            <Divider />
          </Segment>
          <Segment $w={147}>
            <Grip />
            <Keys $cols={3}>
              {zoomKeys.map(([n, i]) => <Tool key={n} $w={29} aria-label={n}><Ic soft>{i}</Ic></Tool>)}
            </Keys>
            <Keys $cols={1}>
              <Tool $w={29} aria-label="垂直放大"><Ic soft>{vArrow}{lens(10, 7, "+")}</Ic></Tool>
              <Tool $w={29} aria-label="垂直缩小"><Ic soft>{vArrow}{lens(10, 7, "-")}</Ic></Tool>
            </Keys>
            <Spring />
            <Divider />
          </Segment>
          <Segment $grow>
            <Grip />
            <BigTime>1:36.291</BigTime>
            <Divider />
          </Segment>
          <Segment $w={270}>
            <Grip />
            <Times>
              <span />
              <TimeLabel id="t-start">始</TimeLabel>
              <TimeLabel id="t-end">尾</TimeLabel>
              <TimeLabel id="t-len">长度</TimeLabel>
              <TimeLabel id="t-sel" $right>选</TimeLabel>
              <TimeField aria-labelledby="t-sel t-start" defaultValue="1:36.291" />
              <TimeField aria-labelledby="t-sel t-end" defaultValue="" />
              <TimeField aria-labelledby="t-sel t-len" defaultValue="0:00.000" />
              <TimeLabel id="t-view" $right>查看</TimeLabel>
              <TimeField aria-labelledby="t-view t-start" defaultValue="0:52.237" />
              <TimeField aria-labelledby="t-view t-end" defaultValue="1:38.047" />
              <TimeField aria-labelledby="t-view t-len" defaultValue="0:45.810" />
            </Times>
          </Segment>
        </Bottom>
        <Status>
          <Grip />
          <Meter />
          <Meter $end />
        </Status>
      </Body>
    </Frame>
  );
}
